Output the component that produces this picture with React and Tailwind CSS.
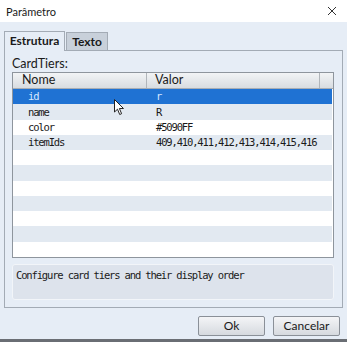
import React from "react";

const rows = [
  ["id", "r"],
  ["name", "R"],
  ["color", "#5090FF"],
  ["itemIds", "409,410,411,412,413,414,415,416"],
  ["", ""], ["", ""], ["", ""], ["", ""], ["", ""], ["", ""], ["", ""],
];

const mono = { fontFamily: '"DejaVu Sans Mono", "Liberation Mono", monospace', letterSpacing: "-1.15px" };

export default function App() {
  const sans = { fontFamily: 'Lato, "Noto Sans", sans-serif' };
  return (
    <div className="w-[347px] h-[342px] bg-[#e6edf6] flex flex-col relative overflow-hidden" style={sans}>
      {/* title bar */}
      <div className="h-[22px] bg-white flex items-center justify-between pl-[6px] pr-[8px] shrink-0">
        <span className="text-[11px] text-[#1a1a1a] leading-none">Parâmetro</span>
        <svg width="10" height="10" viewBox="0 0 10 10" className="mr-[2px]">
          <path d="M1 1L9 9M9 1L1 9" stroke="#333" strokeWidth="1" />
        </svg>
      </div>

      <div className="flex flex-col px-[4px] pt-[8px] flex-1">
        {/* tabs */}
        <div className="flex items-end h-[20px] relative z-10">
          <div className="h-[20px] w-[61px] bg-[#e6edf6] border border-b-0 border-[#a3abb5] flex items-center justify-center text-[12px] font-bold text-[#1a1a1a] -mb-px pb-px">
            Estrutura
          </div>
          <div className="h-[18px] w-[42px] ml-[1px] bg-[#c8d0da] border border-b-0 border-[#a3abb5] flex items-center justify-center text-[12px] font-bold text-[#1a1a1a]">
            Texto
          </div>
        </div>

        {/* panel */}
        <div className="h-[258px] border border-[#a3abb5] bg-[#e6edf6] flex flex-col pl-[7px] pr-[8px]">
          <div className="h-[21px] flex items-end pb-[2px] text-[12.5px] text-[#1a1a1a] leading-none">CardTiers:</div>

          {/* table */}
          <div className="h-[186px] border border-[#8e959d] bg-white flex flex-col">
            <div className="h-[16px] flex bg-gradient-to-b from-[#f2f4f6] to-[#d8dce0] border-b border-[#a8adb3] text-[12.5px] text-[#1a1a1a] leading-none shrink-0">
              <div className="w-[134px] border-r border-[#b0b5ba] flex items-center pl-[9px]">Nome</div>
              <div className="flex-1 border-r border-[#b0b5ba] flex items-center pl-[8px]">Valor</div>
              <div className="w-[13px]"></div>
            </div>
            {rows.map(([k, v], i) => (
              <div
                key={i}
                className={
                  "h-[15.3px] flex items-center text-[10.5px] leading-none mr-[1px] " +
                  (i === 0
                    ? "bg-[#1f72d3] text-[#d8e8ff]"
                    : i % 2 === 1
                    ? "bg-[#e2e9f1] text-[#1a1a1a]"
                    : "bg-white text-[#1a1a1a]")
                }
                style={mono}
              >
                <div className="w-[134px] pl-[15px]">{k}</div>
                <div className="flex-1 pl-[9px]">{v}</div>
              </div>
            ))}
          </div>

          {/* description */}
          <div className="mt-[6px] h-[36px] border border-[#f2f5f9] rounded-[3px] bg-[#dde3ec] px-[3px] pt-[3px] text-[10.5px] text-[#1a1a1a] leading-[14px]" style={mono}>
            Configure card tiers and their display order
          </div>
        </div>

        {/* buttons */}
        <div className="flex justify-end gap-[8px] mt-[8px] pr-[3px]">
          <button className="w-[67px] h-[20px] border border-[#8a9098] rounded-[2px] bg-gradient-to-b from-[#f4f5f7] to-[#d6dadf] text-[12px] text-[#1a1a1a] leading-none" style={sans}>
            Ok
          </button>
          <button className="w-[67px] h-[20px] border border-[#8a9098] rounded-[2px] bg-gradient-to-b from-[#f4f5f7] to-[#d6dadf] text-[12px] text-[#1a1a1a] leading-none" style={sans}>
            Cancelar
          </button>
        </div>
      </div>

      <div className="h-[3px] bg-[#6a6e74] shrink-0"></div>

      {/* mouse cursor */}
      <svg className="absolute left-[114px] top-[99px]" width="11" height="17" viewBox="0 0 11 17">
        <path d="M0.5 0.5 L0.5 13 L3.5 10.2 L5.7 15.5 L7.6 14.7 L5.4 9.5 L9.5 9.5 Z" fill="white" stroke="#222" strokeWidth="1" strokeLinejoin="round" />
      </svg>
    </div>
  );
}
